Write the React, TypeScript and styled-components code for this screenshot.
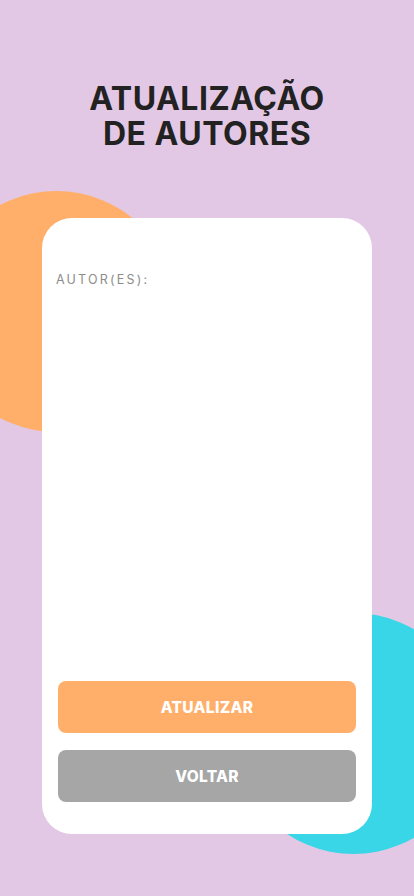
import React from "react";
import styled, { createGlobalStyle } from "styled-components";

const Global = createGlobalStyle`
  html, body { margin: 0; padding: 0; }
  body {
    background: #e3c8e5;
    font-family: Inter, "Open Sans", "DejaVu Sans", sans-serif;
  }
`;

const Screen = styled.div`
  position: relative;
  width: 414px;
  height: 896px;
  overflow: hidden;
  background: #e3c8e5;
  display: flex;
  flex-direction: column;
  align-items: center;
`;

const Blob = styled.div<{ $color: string; $left: number; $top: number }>`
  position: absolute;
  left: ${(p) => p.$left}px;
  top: ${(p) => p.$top}px;
  width: 241px;
  height: 241px;
  border-radius: 50%;
  background: ${(p) => p.$color};
`;

const Title = styled.h1`
  position: relative;
  margin: 81px 0 0;
  display: flex;
  flex-direction: column;
  align-items: center;
  font-family: Inter, "DejaVu Sans", sans-serif;
  font-weight: 700;
  font-size: 32px;
  letter-spacing: 0.5px;
  color: #222222;
  text-align: center;
`;

const TitleLine = styled.span`
  display: block;
  height: 35px;
  line-height: 35px;
`;

const Card = styled.main`
  position: relative;
  margin-top: 67px;
  width: 330px;
  height: 616px;
  box-sizing: border-box;
  background: #ffffff;
  border-radius: 30px;
  padding: 54px 16px 32px 14px;
  display: flex;
  flex-direction: column;
`;

const Label = styled.label`
  font-family: Inter, "DejaVu Sans", sans-serif;
  font-size: 12.5px;
  letter-spacing: 2.2px;
  color: #8c8c8c;
  line-height: 16px;
`;

const Spacer = styled.div`
  flex: 1;
`;

const Actions = styled.div`
  display: flex;
  flex-direction: column;
  gap: 17px;
  padding-left: 2px;
`;

const Button = styled.button<{ $bg: string }>`
  height: 52px;
  width: 100%;
  border: none;
  border-radius: 8px;
  background: ${(p) => p.$bg};
  color: #ffffff;
  font-family: Inter, "DejaVu Sans", sans-serif;
  font-weight: 800;
  font-size: 15.5px;
  letter-spacing: 0.3px;
  cursor: pointer;
`;

export default function App() {
  return (
    <>
      <Global />
      <Screen>
        <Blob $color="#ffaf6a" $left={-64} $top={191} />
        <Blob $color="#38d6e6" $left={233} $top={613} />
        <Title>
          <TitleLine>ATUALIZAÇÃO</TitleLine>
          <TitleLine>DE AUTORES</TitleLine>
        </Title>
        <Card>
          <Label>AUTOR(ES):</Label>
          <Spacer />
          <Actions>
            <Button $bg="#ffaf6a">ATUALIZAR</Button>
            <Button $bg="#a6a6a6">VOLTAR</Button>
          </Actions>
        </Card>
      </Screen>
    </>
  );
}
